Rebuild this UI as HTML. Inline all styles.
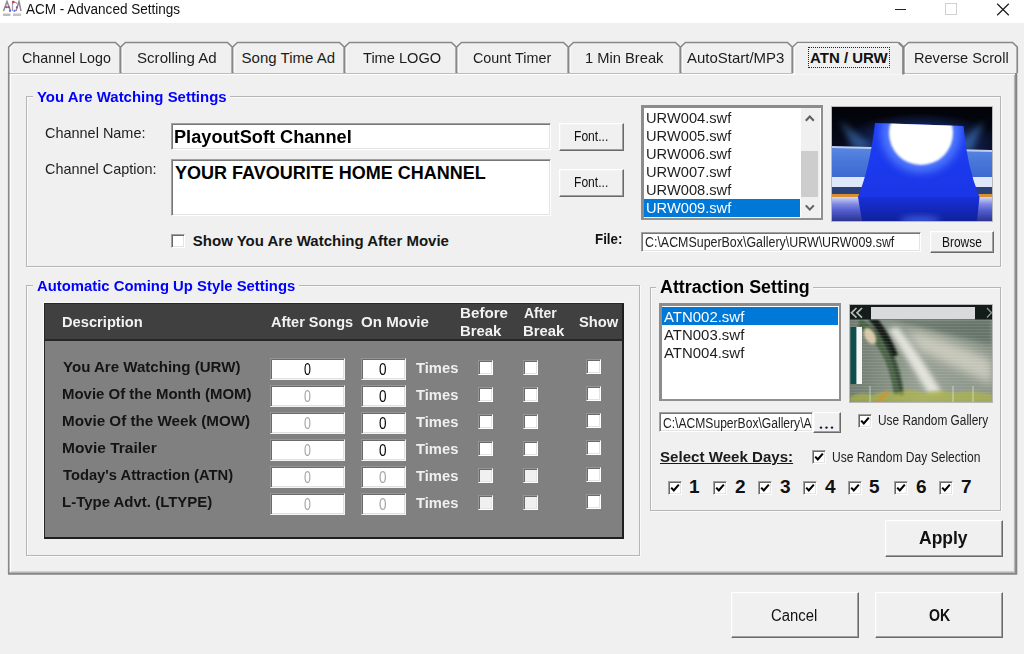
<!DOCTYPE html>
<html><head><meta charset="utf-8"><style>
html,body{margin:0;padding:0;}
body{width:1024px;height:654px;position:relative;overflow:hidden;background:#f0f0f0;font-family:"Liberation Sans",sans-serif;}
body>div,body>svg{position:absolute;}
.t{white-space:nowrap;}
</style></head><body>
<div style="left:0px;top:0px;width:1024px;height:23px;background:#fff"></div>
<svg style="left:0px;top:0px" width="24" height="20" viewBox="0 0 24 20">
<path d="M3.5 11 L7 1.5 L10.5 11 M5 7.3 L9.5 7.3" stroke="#8c8c8c" stroke-width="1.5" fill="none"/>
<path d="M12.5 11 L12.5 3 Q15 1 17 3.5" stroke="#a0a0a0" stroke-width="1.3" fill="none"/>
<path d="M16 11 L19 1.5 L21 11" stroke="#8c8c8c" stroke-width="1.5" fill="none"/>
<circle cx="13.3" cy="2" r="1.3" fill="#d03050"/>
<circle cx="6.4" cy="7.3" r="1" fill="#a040b0"/><circle cx="9" cy="7.3" r="1" fill="#a040b0"/><circle cx="16.8" cy="7.3" r="1" fill="#a040b0"/>
<circle cx="10" cy="10.8" r="1.1" fill="#5a5aff"/><circle cx="14.5" cy="10.8" r="1.1" fill="#5a5aff"/>
<rect x="3" y="13.5" width="7.5" height="2.5" fill="#bdbdbd"/><rect x="13" y="13.5" width="8" height="2.5" fill="#c4c4c4"/>
</svg>
<div class="t" style="left:26.30px;top:2px;font:14px/14px 'Liberation Sans',sans-serif;color:#111;transform:scaleX(0.9654);transform-origin:0 0;">ACM - Advanced Settings</div>
<div style="left:895px;top:9px;width:11px;height:1px;background:#222"></div>
<div style="left:945px;top:3px;width:12px;height:12px;border:1px solid #d0d0d0;box-sizing:border-box"></div>
<svg style="left:996px;top:3px" width="14" height="13" viewBox="0 0 14 13">
<path d="M1.2 0.8 L12.8 12.2 M12.8 0.8 L1.2 12.2" stroke="#1a1a1a" stroke-width="1.2"/></svg>
<svg style="left:0;top:36px" width="1024" height="545" viewBox="0 36 1024 545">
<rect x="8" y="73" width="1009" height="501" fill="#f0f0f0"/>
<path d="M8.75 574 V72.75 H1017" stroke="#888888" stroke-width="1.7" fill="none"/>
<path d="M10.5 573 V74.5 H1015" stroke="#ffffff" stroke-width="1.2" fill="none"/>
<path d="M1016.2 73 V573.7 H8" stroke="#858585" stroke-width="2.2" fill="none"/>
<path d="M1014.4 75 V572 H11" stroke="#b0b0b0" stroke-width="1" fill="none"/>
<path d="M8.75 73 V47 L13.5 42.5 H115.5 L120.25 47 V73" fill="#f0f0f0" stroke="#888888" stroke-width="1.7"/>
<path d="M10.2 72 V47.6 L14 44" stroke="#fff" stroke-width="1" fill="none"/>
<path d="M120.75 73 V47 L125.5 42.5 H227.5 L232.25 47 V73" fill="#f0f0f0" stroke="#888888" stroke-width="1.7"/>
<path d="M122.2 72 V47.6 L126 44" stroke="#fff" stroke-width="1" fill="none"/>
<path d="M232.75 73 V47 L237.5 42.5 H339.5 L344.25 47 V73" fill="#f0f0f0" stroke="#888888" stroke-width="1.7"/>
<path d="M234.2 72 V47.6 L238 44" stroke="#fff" stroke-width="1" fill="none"/>
<path d="M344.75 73 V47 L349.5 42.5 H451.5 L456.25 47 V73" fill="#f0f0f0" stroke="#888888" stroke-width="1.7"/>
<path d="M346.2 72 V47.6 L350 44" stroke="#fff" stroke-width="1" fill="none"/>
<path d="M456.75 73 V47 L461.5 42.5 H563.5 L568.25 47 V73" fill="#f0f0f0" stroke="#888888" stroke-width="1.7"/>
<path d="M458.2 72 V47.6 L462 44" stroke="#fff" stroke-width="1" fill="none"/>
<path d="M568.75 73 V47 L573.5 42.5 H675.5 L680.25 47 V73" fill="#f0f0f0" stroke="#888888" stroke-width="1.7"/>
<path d="M570.2 72 V47.6 L574 44" stroke="#fff" stroke-width="1" fill="none"/>
<path d="M680.75 73 V47 L685.5 42.5 H787.5 L792.25 47 V73" fill="#f0f0f0" stroke="#888888" stroke-width="1.7"/>
<path d="M682.2 72 V47.6 L686 44" stroke="#fff" stroke-width="1" fill="none"/>
<path d="M903.75 73 V47 L908.5 42.5 H1012.5 L1017.25 47 V73" fill="#f0f0f0" stroke="#888888" stroke-width="1.7"/>
<path d="M905.2 72 V47.6 L909 44" stroke="#fff" stroke-width="1" fill="none"/>
<path d="M792.75 74.5 V47 L797.5 42.5 H898.5 L903.25 47 V74.5" fill="#f0f0f0" stroke="none"/>
<path d="M792.75 73 V47 L797.5 42.5 H898.5" stroke="#888888" stroke-width="1.7" fill="none"/>
<path d="M794.2 75 V47.6 L798 44 H898" stroke="#fff" stroke-width="1.1" fill="none"/>
<path d="M898.5 42.5 L903.25 47 V74.5" stroke="#858585" stroke-width="2.2" fill="none"/>
</svg>
<div class="t" style="left:22.10px;top:50px;font:15px/15px 'Liberation Sans',sans-serif;color:#1c1c1c;transform:scaleX(0.9516);transform-origin:0 0;">Channel Logo</div>
<div class="t" style="left:136.59px;top:50px;font:15px/15px 'Liberation Sans',sans-serif;color:#1c1c1c;transform:scaleX(1.0064);transform-origin:0 0;">Scrolling Ad</div>
<div class="t" style="left:241.60px;top:50px;font:15px/15px 'Liberation Sans',sans-serif;color:#1c1c1c;">Song Time Ad</div>
<div class="t" style="left:362.80px;top:50px;font:15px/15px 'Liberation Sans',sans-serif;color:#1c1c1c;transform:scaleX(0.9737);transform-origin:0 0;">Time LOGO</div>
<div class="t" style="left:473.00px;top:50px;font:15px/15px 'Liberation Sans',sans-serif;color:#1c1c1c;transform:scaleX(0.9573);transform-origin:0 0;">Count Timer</div>
<div class="t" style="left:584.62px;top:50px;font:15px/15px 'Liberation Sans',sans-serif;color:#1c1c1c;transform:scaleX(0.9797);transform-origin:0 0;">1 Min Break</div>
<div class="t" style="left:687.00px;top:50px;font:15px/15px 'Liberation Sans',sans-serif;color:#1c1c1c;transform:scaleX(0.9979);transform-origin:0 0;">AutoStart/MP3</div>
<div class="t" style="left:914.13px;top:50px;font:15px/15px 'Liberation Sans',sans-serif;color:#1c1c1c;transform:scaleX(0.9708);transform-origin:0 0;">Reverse Scroll</div>
<div class="t" style="left:810.00px;top:50px;font:bold 15px/15px 'Liberation Sans',sans-serif;color:#111;">ATN / URW</div>
<div style="left:808px;top:47px;width:82px;height:21px;border:1px dotted #222;box-sizing:border-box"></div>
<div style="left:26px;top:96px;width:975px;height:171px;border:1px solid #b6b6b6;box-sizing:border-box;box-shadow:1px 1px 0 #fafafa, inset 1px 1px 0 #fafafa"></div>
<div style="left:33.2px;top:88px;width:197.3px;height:14px;background:#f0f0f0"></div>
<div class="t" style="left:37.20px;top:89px;font:bold 15px/15px 'Liberation Sans',sans-serif;color:#0000ff;transform:scaleX(0.9963);transform-origin:0 0;">You Are Watching Settings</div>
<div class="t" style="left:44.80px;top:125px;font:15px/15px 'Liberation Sans',sans-serif;color:#1e1e1e;transform:scaleX(0.9641);transform-origin:0 0;">Channel Name:</div>
<div class="t" style="left:44.80px;top:161px;font:15px/15px 'Liberation Sans',sans-serif;color:#1e1e1e;transform:scaleX(0.9626);transform-origin:0 0;">Channel Caption:</div>
<div style="left:171px;top:123px;width:380px;height:27px;background:#fff;border:1px solid;border-color:#a0a0a0 #ffffff #ffffff #a0a0a0;box-sizing:border-box;box-shadow:inset 1px 1px 0 #777777, inset -1px -1px 0 #e3e3e3"></div>
<div class="t" style="left:173.99px;top:128px;font:bold 18px/18px 'Liberation Sans',sans-serif;color:#000;transform:scaleX(1.0098);transform-origin:0 0;">PlayoutSoft Channel</div>
<div style="left:171px;top:159px;width:380px;height:57px;background:#fff;border:1px solid;border-color:#a0a0a0 #ffffff #ffffff #a0a0a0;box-sizing:border-box;box-shadow:inset 1px 1px 0 #777777, inset -1px -1px 0 #e3e3e3"></div>
<div class="t" style="left:175.00px;top:164px;font:bold 18px/18px 'Liberation Sans',sans-serif;color:#000;">YOUR FAVOURITE HOME CHANNEL</div>
<div style="left:559px;top:123px;width:65px;height:28px;background:#f0f0f0;border:1px solid;border-color:#ffffff #6a6a6a #6a6a6a #ffffff;box-sizing:border-box;box-shadow:inset -1px -1px 0 #a0a0a0, inset 1px 1px 0 #f4f4f4"></div>
<div class="t" style="left:573.74px;top:129px;font:14px/14px 'Liberation Sans',sans-serif;color:#111;transform:scaleX(0.8632);transform-origin:0 0;">Font...</div>
<div style="left:559px;top:169px;width:65px;height:28px;background:#f0f0f0;border:1px solid;border-color:#ffffff #6a6a6a #6a6a6a #ffffff;box-sizing:border-box;box-shadow:inset -1px -1px 0 #a0a0a0, inset 1px 1px 0 #f4f4f4"></div>
<div class="t" style="left:573.74px;top:175px;font:14px/14px 'Liberation Sans',sans-serif;color:#111;transform:scaleX(0.8632);transform-origin:0 0;">Font...</div>
<div style="left:171px;top:234px;width:14px;height:14px;background:#fff;border:1px solid;border-color:#a0a0a0 #ffffff #ffffff #a0a0a0;box-sizing:border-box;box-shadow:inset 1px 1px 0 #696969, inset -1px -1px 0 #e3e3e3"></div>
<div class="t" style="left:192.80px;top:233px;font:bold 15px/15px 'Liberation Sans',sans-serif;color:#161616;">Show You Are Watching After Movie</div>
<div class="t" style="left:595.25px;top:232px;font:bold 14px/14px 'Liberation Sans',sans-serif;color:#111;transform:scaleX(0.9519);transform-origin:0 0;">File:</div>
<div style="left:641px;top:232px;width:280px;height:20px;background:#fff;border:1px solid;border-color:#a0a0a0 #ffffff #ffffff #a0a0a0;box-sizing:border-box;box-shadow:inset 1px 1px 0 #777777, inset -1px -1px 0 #e3e3e3"></div>
<div class="t" style="left:644.60px;top:235px;font:14px/14px 'Liberation Sans',sans-serif;color:#222;transform:scaleX(0.8869);transform-origin:0 0;">C:\ACMSuperBox\Gallery\URW\URW009.swf</div>
<div style="left:930px;top:231px;width:64px;height:22px;background:#f0f0f0;border:1px solid;border-color:#ffffff #6a6a6a #6a6a6a #ffffff;box-sizing:border-box;box-shadow:inset -1px -1px 0 #a0a0a0, inset 1px 1px 0 #f4f4f4"></div>
<div class="t" style="left:941.85px;top:235px;font:14px/14px 'Liberation Sans',sans-serif;color:#111;transform:scaleX(0.8543);transform-origin:0 0;">Browse</div>
<div style="left:641px;top:105px;width:182px;height:115px;background:#fff;border-style:solid;border-width:3px 2px 2px 3px;border-color:#8c8c8c #909090 #909090 #8c8c8c;box-sizing:border-box"></div>
<div class="t" style="left:646.02px;top:110px;font:15px/15px 'Liberation Sans',sans-serif;color:#1e1e1e;transform:scaleX(0.9770);transform-origin:0 0;">URW004.swf</div>
<div class="t" style="left:646.02px;top:128px;font:15px/15px 'Liberation Sans',sans-serif;color:#1e1e1e;transform:scaleX(0.9770);transform-origin:0 0;">URW005.swf</div>
<div class="t" style="left:646.02px;top:146px;font:15px/15px 'Liberation Sans',sans-serif;color:#1e1e1e;transform:scaleX(0.9770);transform-origin:0 0;">URW006.swf</div>
<div class="t" style="left:646.02px;top:164px;font:15px/15px 'Liberation Sans',sans-serif;color:#1e1e1e;transform:scaleX(0.9770);transform-origin:0 0;">URW007.swf</div>
<div class="t" style="left:646.02px;top:182px;font:15px/15px 'Liberation Sans',sans-serif;color:#1e1e1e;transform:scaleX(0.9770);transform-origin:0 0;">URW008.swf</div>
<div style="left:644px;top:199px;width:156px;height:18px;background:#0078d7"></div>
<div class="t" style="left:646.02px;top:200px;font:15px/15px 'Liberation Sans',sans-serif;color:#fff;transform:scaleX(0.9770);transform-origin:0 0;">URW009.swf</div>
<div style="left:801px;top:108px;width:19px;height:110px;background:#f0f0f0"></div>
<div style="left:801px;top:151px;width:17px;height:46px;background:#cdcdcd"></div>
<svg style="left:801px;top:108px" width="18" height="110"><path d="M4.8 12.8 L8.8 8.6 L12.8 12.8" stroke="#606060" stroke-width="2.1" fill="none"/><path d="M4.8 97.4 L8.8 101.6 L12.8 97.4" stroke="#606060" stroke-width="2.1" fill="none"/></svg>
<div style="left:831px;top:106px;width:162px;height:116px;background:#b8b8b8"></div>
<svg style="left:832px;top:107px" width="160" height="114" viewBox="0 0 160 114">
<defs>
<linearGradient id="sky" x1="0" y1="0" x2="0" y2="1"><stop offset="0" stop-color="#020308"/><stop offset="0.5" stop-color="#080e24"/><stop offset="1" stop-color="#142050"/></linearGradient>
<radialGradient id="skyg" cx="0.55" cy="0.6" r="0.5"><stop offset="0" stop-color="#2a50c0" stop-opacity="0.9"/><stop offset="1" stop-color="#2a50c0" stop-opacity="0"/></radialGradient>
<radialGradient id="glow" cx="0.5" cy="0.2" r="0.62"><stop offset="0" stop-color="#ffffff"/><stop offset="0.55" stop-color="#ffffff"/><stop offset="0.75" stop-color="#7aa4ff"/><stop offset="1" stop-color="#2040ff" stop-opacity="0"/></radialGradient>
<linearGradient id="band" x1="0" y1="0" x2="0" y2="1"><stop offset="0" stop-color="#5a88e4"/><stop offset="0.5" stop-color="#4876d8"/><stop offset="1" stop-color="#3e6ad0"/></linearGradient>
<linearGradient id="low" x1="0" y1="0" x2="0" y2="1"><stop offset="0" stop-color="#d4d8f4"/><stop offset="0.3" stop-color="#8088e0"/><stop offset="0.55" stop-color="#5460d0"/><stop offset="1" stop-color="#2a3490"/></linearGradient>
<linearGradient id="blk" x1="0" y1="0" x2="0" y2="1"><stop offset="0" stop-color="#1e3ef6"/><stop offset="1" stop-color="#1a36e6"/></linearGradient>
<linearGradient id="refl" x1="0" y1="0" x2="0" y2="1"><stop offset="0" stop-color="#1830d8"/><stop offset="1" stop-color="#10209c"/></linearGradient>
<filter id="bl4" x="-50%" y="-50%" width="200%" height="200%"><feGaussianBlur stdDeviation="4"/></filter>
<filter id="bl1" x="-50%" y="-50%" width="200%" height="200%"><feGaussianBlur stdDeviation="1.2"/></filter>
<filter id="bl3" x="-50%" y="-50%" width="200%" height="200%"><feGaussianBlur stdDeviation="3"/></filter>
<clipPath id="blkc"><path d="M43 16 L131.5 19 Q135 60 147.5 90 L26 90 Q38 60 43 16 Z"/></clipPath>
</defs>
<rect width="160" height="114" fill="url(#sky)"/>
<rect width="160" height="60" fill="url(#skyg)"/>
<path d="M8 14 L42 40 L22 42 Z" fill="#4a88d0" opacity="0.5" filter="url(#bl3)"/>
<path d="M152 14 L120 42 L140 44 Z" fill="#4a88d0" opacity="0.5" filter="url(#bl3)"/>
<path d="M0 40 L160 44 L160 70 L0 70 Z" fill="url(#band)"/>
<path d="M0 40 L160 44" stroke="#c0ccf0" stroke-width="2"/>
<rect x="0" y="70" width="160" height="10" fill="#dfe8fa"/>
<rect x="0" y="80" width="160" height="7" fill="#2c4078"/>
<rect x="0" y="87" width="160" height="3" fill="#d89030"/>
<rect x="0" y="90" width="160" height="24" fill="url(#low)"/>
<path d="M43 16 L131.5 19 Q135 60 147.5 90 L26 90 Q38 60 43 16 Z" fill="url(#blk)"/>
<path d="M26 90 L147.5 90 L145 114 L30 114 Z" fill="url(#refl)"/>
<g clip-path="url(#blkc)">
<circle cx="89" cy="26" r="40" fill="#5a86ff" opacity="0.8" filter="url(#bl4)"/>
<circle cx="89" cy="26" r="32" fill="#ffffff" filter="url(#bl1)"/>
</g>
<ellipse cx="88" cy="113" rx="20" ry="4" fill="#5a7cff" opacity="0.6" filter="url(#bl3)"/>
</svg>
<div style="left:26px;top:285px;width:614px;height:271px;border:1px solid #b6b6b6;box-sizing:border-box;box-shadow:1px 1px 0 #fafafa, inset 1px 1px 0 #fafafa"></div>
<div style="left:32.8px;top:277px;width:266.4px;height:14px;background:#f0f0f0"></div>
<div class="t" style="left:36.80px;top:278px;font:bold 15px/15px 'Liberation Sans',sans-serif;color:#0000ff;transform:scaleX(0.9900);transform-origin:0 0;">Automatic Coming Up Style Settings</div>
<div style="left:43px;top:302px;width:582px;height:238px;border-top:1px solid #fafafa;border-left:1px solid #fafafa;box-sizing:border-box"></div>
<div style="left:44px;top:303px;width:580px;height:236px;background:#808080;border:1px solid #262626;border-right:2px solid #1e1e1e;border-bottom:2px solid #1e1e1e;box-sizing:border-box"></div>
<div style="left:45px;top:304px;width:577px;height:35px;background:#404040"></div>
<div style="left:45px;top:339px;width:577px;height:2px;background:#262626"></div>
<div class="t" style="left:61.72px;top:314px;font:bold 15px/15px 'Liberation Sans',sans-serif;color:#f2f2f2;transform:scaleX(0.9790);transform-origin:0 0;">Description</div>
<div class="t" style="left:270.70px;top:314px;font:bold 15px/15px 'Liberation Sans',sans-serif;color:#f2f2f2;transform:scaleX(0.9659);transform-origin:0 0;">After Songs</div>
<div class="t" style="left:360.60px;top:314px;font:bold 15px/15px 'Liberation Sans',sans-serif;color:#f2f2f2;transform:scaleX(1.0060);transform-origin:0 0;">On Movie</div>
<div class="t" style="left:459.79px;top:305px;font:bold 15px/15px 'Liberation Sans',sans-serif;color:#f2f2f2;transform:scaleX(1.0109);transform-origin:0 0;">Before</div>
<div class="t" style="left:459.81px;top:323px;font:bold 15px/15px 'Liberation Sans',sans-serif;color:#f2f2f2;transform:scaleX(0.9927);transform-origin:0 0;">Break</div>
<div class="t" style="left:523.90px;top:305px;font:bold 15px/15px 'Liberation Sans',sans-serif;color:#f2f2f2;transform:scaleX(0.9343);transform-origin:0 0;">After</div>
<div class="t" style="left:522.91px;top:323px;font:bold 15px/15px 'Liberation Sans',sans-serif;color:#f2f2f2;transform:scaleX(0.9927);transform-origin:0 0;">Break</div>
<div class="t" style="left:579.20px;top:314px;font:bold 15px/15px 'Liberation Sans',sans-serif;color:#f2f2f2;transform:scaleX(0.9825);transform-origin:0 0;">Show</div>
<div class="t" style="left:63.00px;top:359px;font:bold 15px/15px 'Liberation Sans',sans-serif;color:#141414;transform:scaleX(1.0045);transform-origin:0 0;">You Are Watching (URW)</div>
<div style="left:270px;top:358px;width:75px;height:22px;background:#fff;border:1px solid;border-color:#959595 #f4f4f4 #f4f4f4 #959595;box-sizing:border-box;box-shadow:inset 1px 1px 0 #6a6a6a, inset -1px -1px 0 #e0e0e0"></div>
<div class="t" style="left:303.50px;top:362px;font:16px/16px 'Liberation Sans',sans-serif;color:#000;transform:scaleX(0.7778);transform-origin:0 0;">0</div>
<div style="left:361px;top:358px;width:45px;height:22px;background:#fff;border:1px solid;border-color:#959595 #f4f4f4 #f4f4f4 #959595;box-sizing:border-box;box-shadow:inset 1px 1px 0 #6a6a6a, inset -1px -1px 0 #e0e0e0"></div>
<div class="t" style="left:378.70px;top:362px;font:16px/16px 'Liberation Sans',sans-serif;color:#000;transform:scaleX(0.8444);transform-origin:0 0;">0</div>
<div class="t" style="left:415.50px;top:360px;font:bold 15px/15px 'Liberation Sans',sans-serif;color:#f0f0f0;transform:scaleX(0.9837);transform-origin:0 0;">Times</div>
<div style="left:478px;top:360px;width:15px;height:15px;background:#fff;border:1px solid;border-color:#959595 #ffffff #ffffff #959595;box-sizing:border-box;box-shadow:inset 1px 1px 0 #6a6a6a, inset -1px -1px 0 #e3e3e3"></div>
<div style="left:523px;top:360px;width:15px;height:15px;background:#fff;border:1px solid;border-color:#959595 #ffffff #ffffff #959595;box-sizing:border-box;box-shadow:inset 1px 1px 0 #6a6a6a, inset -1px -1px 0 #e3e3e3"></div>
<div style="left:586px;top:359px;width:15px;height:15px;background:#fff;border:1px solid;border-color:#959595 #ffffff #ffffff #959595;box-sizing:border-box;box-shadow:inset 1px 1px 0 #6a6a6a, inset -1px -1px 0 #e3e3e3"></div>
<div class="t" style="left:62.00px;top:386px;font:bold 15px/15px 'Liberation Sans',sans-serif;color:#141414;transform:scaleX(0.9974);transform-origin:0 0;">Movie Of the Month (MOM)</div>
<div style="left:270px;top:385px;width:75px;height:22px;background:#fff;border:1px solid;border-color:#959595 #f4f4f4 #f4f4f4 #959595;box-sizing:border-box;box-shadow:inset 1px 1px 0 #6a6a6a, inset -1px -1px 0 #e0e0e0"></div>
<div class="t" style="left:303.50px;top:389px;font:16px/16px 'Liberation Sans',sans-serif;color:#a6a6a6;transform:scaleX(0.7778);transform-origin:0 0;">0</div>
<div style="left:361px;top:385px;width:45px;height:22px;background:#fff;border:1px solid;border-color:#959595 #f4f4f4 #f4f4f4 #959595;box-sizing:border-box;box-shadow:inset 1px 1px 0 #6a6a6a, inset -1px -1px 0 #e0e0e0"></div>
<div class="t" style="left:378.70px;top:389px;font:16px/16px 'Liberation Sans',sans-serif;color:#000;transform:scaleX(0.8444);transform-origin:0 0;">0</div>
<div class="t" style="left:415.50px;top:387px;font:bold 15px/15px 'Liberation Sans',sans-serif;color:#f0f0f0;transform:scaleX(0.9837);transform-origin:0 0;">Times</div>
<div style="left:478px;top:387px;width:15px;height:15px;background:#fff;border:1px solid;border-color:#959595 #ffffff #ffffff #959595;box-sizing:border-box;box-shadow:inset 1px 1px 0 #6a6a6a, inset -1px -1px 0 #e3e3e3"></div>
<div style="left:523px;top:387px;width:15px;height:15px;background:#fff;border:1px solid;border-color:#959595 #ffffff #ffffff #959595;box-sizing:border-box;box-shadow:inset 1px 1px 0 #6a6a6a, inset -1px -1px 0 #e3e3e3"></div>
<div style="left:586px;top:386px;width:15px;height:15px;background:#fff;border:1px solid;border-color:#959595 #ffffff #ffffff #959595;box-sizing:border-box;box-shadow:inset 1px 1px 0 #6a6a6a, inset -1px -1px 0 #e3e3e3"></div>
<div class="t" style="left:61.99px;top:413px;font:bold 15px/15px 'Liberation Sans',sans-serif;color:#141414;transform:scaleX(1.0141);transform-origin:0 0;">Movie Of the Week (MOW)</div>
<div style="left:270px;top:412px;width:75px;height:22px;background:#fff;border:1px solid;border-color:#959595 #f4f4f4 #f4f4f4 #959595;box-sizing:border-box;box-shadow:inset 1px 1px 0 #6a6a6a, inset -1px -1px 0 #e0e0e0"></div>
<div class="t" style="left:303.50px;top:416px;font:16px/16px 'Liberation Sans',sans-serif;color:#a6a6a6;transform:scaleX(0.7778);transform-origin:0 0;">0</div>
<div style="left:361px;top:412px;width:45px;height:22px;background:#fff;border:1px solid;border-color:#959595 #f4f4f4 #f4f4f4 #959595;box-sizing:border-box;box-shadow:inset 1px 1px 0 #6a6a6a, inset -1px -1px 0 #e0e0e0"></div>
<div class="t" style="left:378.70px;top:416px;font:16px/16px 'Liberation Sans',sans-serif;color:#000;transform:scaleX(0.8444);transform-origin:0 0;">0</div>
<div class="t" style="left:415.50px;top:414px;font:bold 15px/15px 'Liberation Sans',sans-serif;color:#f0f0f0;transform:scaleX(0.9837);transform-origin:0 0;">Times</div>
<div style="left:478px;top:414px;width:15px;height:15px;background:#fff;border:1px solid;border-color:#959595 #ffffff #ffffff #959595;box-sizing:border-box;box-shadow:inset 1px 1px 0 #6a6a6a, inset -1px -1px 0 #e3e3e3"></div>
<div style="left:523px;top:414px;width:15px;height:15px;background:#fff;border:1px solid;border-color:#959595 #ffffff #ffffff #959595;box-sizing:border-box;box-shadow:inset 1px 1px 0 #6a6a6a, inset -1px -1px 0 #e3e3e3"></div>
<div style="left:586px;top:413px;width:15px;height:15px;background:#fff;border:1px solid;border-color:#959595 #ffffff #ffffff #959595;box-sizing:border-box;box-shadow:inset 1px 1px 0 #6a6a6a, inset -1px -1px 0 #e3e3e3"></div>
<div class="t" style="left:61.97px;top:440px;font:bold 15px/15px 'Liberation Sans',sans-serif;color:#141414;transform:scaleX(1.0330);transform-origin:0 0;">Movie Trailer</div>
<div style="left:270px;top:439px;width:75px;height:22px;background:#fff;border:1px solid;border-color:#959595 #f4f4f4 #f4f4f4 #959595;box-sizing:border-box;box-shadow:inset 1px 1px 0 #6a6a6a, inset -1px -1px 0 #e0e0e0"></div>
<div class="t" style="left:303.50px;top:443px;font:16px/16px 'Liberation Sans',sans-serif;color:#a6a6a6;transform:scaleX(0.7778);transform-origin:0 0;">0</div>
<div style="left:361px;top:439px;width:45px;height:22px;background:#fff;border:1px solid;border-color:#959595 #f4f4f4 #f4f4f4 #959595;box-sizing:border-box;box-shadow:inset 1px 1px 0 #6a6a6a, inset -1px -1px 0 #e0e0e0"></div>
<div class="t" style="left:378.70px;top:443px;font:16px/16px 'Liberation Sans',sans-serif;color:#000;transform:scaleX(0.8444);transform-origin:0 0;">0</div>
<div class="t" style="left:415.50px;top:441px;font:bold 15px/15px 'Liberation Sans',sans-serif;color:#f0f0f0;transform:scaleX(0.9837);transform-origin:0 0;">Times</div>
<div style="left:478px;top:441px;width:15px;height:15px;background:#fff;border:1px solid;border-color:#959595 #ffffff #ffffff #959595;box-sizing:border-box;box-shadow:inset 1px 1px 0 #6a6a6a, inset -1px -1px 0 #e3e3e3"></div>
<div style="left:523px;top:441px;width:15px;height:15px;background:#fff;border:1px solid;border-color:#959595 #ffffff #ffffff #959595;box-sizing:border-box;box-shadow:inset 1px 1px 0 #6a6a6a, inset -1px -1px 0 #e3e3e3"></div>
<div style="left:586px;top:440px;width:15px;height:15px;background:#fff;border:1px solid;border-color:#959595 #ffffff #ffffff #959595;box-sizing:border-box;box-shadow:inset 1px 1px 0 #6a6a6a, inset -1px -1px 0 #e3e3e3"></div>
<div class="t" style="left:63.00px;top:467px;font:bold 15px/15px 'Liberation Sans',sans-serif;color:#141414;transform:scaleX(0.9815);transform-origin:0 0;">Today's Attraction (ATN)</div>
<div style="left:270px;top:466px;width:75px;height:22px;background:#fff;border:1px solid;border-color:#959595 #f4f4f4 #f4f4f4 #959595;box-sizing:border-box;box-shadow:inset 1px 1px 0 #6a6a6a, inset -1px -1px 0 #e0e0e0"></div>
<div class="t" style="left:303.50px;top:470px;font:16px/16px 'Liberation Sans',sans-serif;color:#a6a6a6;transform:scaleX(0.7778);transform-origin:0 0;">0</div>
<div style="left:361px;top:466px;width:45px;height:22px;background:#fff;border:1px solid;border-color:#959595 #f4f4f4 #f4f4f4 #959595;box-sizing:border-box;box-shadow:inset 1px 1px 0 #6a6a6a, inset -1px -1px 0 #e0e0e0"></div>
<div class="t" style="left:378.70px;top:470px;font:16px/16px 'Liberation Sans',sans-serif;color:#a6a6a6;transform:scaleX(0.8444);transform-origin:0 0;">0</div>
<div class="t" style="left:415.50px;top:468px;font:bold 15px/15px 'Liberation Sans',sans-serif;color:#f0f0f0;transform:scaleX(0.9837);transform-origin:0 0;">Times</div>
<div style="left:478px;top:468px;width:15px;height:15px;background:#f0f0f0;border:1px solid;border-color:#959595 #ffffff #ffffff #959595;box-sizing:border-box;box-shadow:inset 1px 1px 0 #6a6a6a, inset -1px -1px 0 #e3e3e3"></div>
<div style="left:523px;top:468px;width:15px;height:15px;background:#f0f0f0;border:1px solid;border-color:#959595 #ffffff #ffffff #959595;box-sizing:border-box;box-shadow:inset 1px 1px 0 #6a6a6a, inset -1px -1px 0 #e3e3e3"></div>
<div style="left:586px;top:467px;width:15px;height:15px;background:#fff;border:1px solid;border-color:#959595 #ffffff #ffffff #959595;box-sizing:border-box;box-shadow:inset 1px 1px 0 #6a6a6a, inset -1px -1px 0 #e3e3e3"></div>
<div class="t" style="left:62.00px;top:494px;font:bold 15px/15px 'Liberation Sans',sans-serif;color:#141414;transform:scaleX(0.9980);transform-origin:0 0;">L-Type Advt. (LTYPE)</div>
<div style="left:270px;top:493px;width:75px;height:22px;background:#fff;border:1px solid;border-color:#959595 #f4f4f4 #f4f4f4 #959595;box-sizing:border-box;box-shadow:inset 1px 1px 0 #6a6a6a, inset -1px -1px 0 #e0e0e0"></div>
<div class="t" style="left:303.50px;top:497px;font:16px/16px 'Liberation Sans',sans-serif;color:#a6a6a6;transform:scaleX(0.7778);transform-origin:0 0;">0</div>
<div style="left:361px;top:493px;width:45px;height:22px;background:#fff;border:1px solid;border-color:#959595 #f4f4f4 #f4f4f4 #959595;box-sizing:border-box;box-shadow:inset 1px 1px 0 #6a6a6a, inset -1px -1px 0 #e0e0e0"></div>
<div class="t" style="left:378.70px;top:497px;font:16px/16px 'Liberation Sans',sans-serif;color:#a6a6a6;transform:scaleX(0.8444);transform-origin:0 0;">0</div>
<div class="t" style="left:415.50px;top:495px;font:bold 15px/15px 'Liberation Sans',sans-serif;color:#f0f0f0;transform:scaleX(0.9837);transform-origin:0 0;">Times</div>
<div style="left:478px;top:495px;width:15px;height:15px;background:#f0f0f0;border:1px solid;border-color:#959595 #ffffff #ffffff #959595;box-sizing:border-box;box-shadow:inset 1px 1px 0 #6a6a6a, inset -1px -1px 0 #e3e3e3"></div>
<div style="left:523px;top:495px;width:15px;height:15px;background:#f0f0f0;border:1px solid;border-color:#959595 #ffffff #ffffff #959595;box-sizing:border-box;box-shadow:inset 1px 1px 0 #6a6a6a, inset -1px -1px 0 #e3e3e3"></div>
<div style="left:586px;top:494px;width:15px;height:15px;background:#fff;border:1px solid;border-color:#959595 #ffffff #ffffff #959595;box-sizing:border-box;box-shadow:inset 1px 1px 0 #6a6a6a, inset -1px -1px 0 #e3e3e3"></div>
<div style="left:650px;top:287px;width:351px;height:224px;border:1px solid #b6b6b6;box-sizing:border-box;box-shadow:1px 1px 0 #fafafa, inset 1px 1px 0 #fafafa"></div>
<div style="left:656.1px;top:279px;width:156.69999999999993px;height:14px;background:#f0f0f0"></div>
<div class="t" style="left:660.10px;top:278px;font:bold 18px/18px 'Liberation Sans',sans-serif;color:#000;transform:scaleX(0.9913);transform-origin:0 0;">Attraction Setting</div>
<div style="left:659px;top:303px;width:182px;height:98px;background:#fff;border-style:solid;border-width:3px 2px 2px 3px;border-color:#8c8c8c #909090 #909090 #8c8c8c;box-sizing:border-box"></div>
<div style="left:662px;top:307px;width:176px;height:18px;background:#0078d7"></div>
<div class="t" style="left:664.30px;top:309px;font:15px/15px 'Liberation Sans',sans-serif;color:#fff;transform:scaleX(0.9963);transform-origin:0 0;">ATN002.swf</div>
<div class="t" style="left:664.30px;top:327px;font:15px/15px 'Liberation Sans',sans-serif;color:#1e1e1e;transform:scaleX(0.9963);transform-origin:0 0;">ATN003.swf</div>
<div class="t" style="left:664.30px;top:345px;font:15px/15px 'Liberation Sans',sans-serif;color:#1e1e1e;transform:scaleX(0.9963);transform-origin:0 0;">ATN004.swf</div>
<div style="left:849px;top:304px;width:144px;height:99px;background:#b8b8b8"></div>
<svg style="left:850px;top:305px" width="142" height="97" viewBox="0 0 142 97">
<defs>
<linearGradient id="g2" x1="0" y1="0" x2="1" y2="0"><stop offset="0" stop-color="#707c70"/><stop offset="0.5" stop-color="#98a094"/><stop offset="1" stop-color="#8a9488"/></linearGradient>
<pattern id="scan" width="4" height="3" patternUnits="userSpaceOnUse"><rect width="4" height="1" fill="#ffffff" opacity="0.09"/></pattern>
<filter id="b2" x="-50%" y="-50%" width="200%" height="200%"><feGaussianBlur stdDeviation="2.5"/></filter>
<filter id="b4" x="-50%" y="-50%" width="200%" height="200%"><feGaussianBlur stdDeviation="5"/></filter>
<filter id="b1" x="-50%" y="-50%" width="200%" height="200%"><feGaussianBlur stdDeviation="0.9"/></filter>
</defs>
<rect width="142" height="97" fill="url(#g2)"/>
<path d="M40 14 L142 14 L142 40 Q100 30 60 20 Z" fill="#4e5e54" opacity="0.6" filter="url(#b2)"/>
<path d="M55 25 Q100 35 142 55 L142 80 Q100 60 70 45 Z" fill="#d8d6c8" opacity="0.75" filter="url(#b4)"/>
<path d="M38 24 Q55 50 78 88 L92 88 Q70 50 48 22 Z" fill="#eeeee6" opacity="0.85" filter="url(#b2)"/>
<path d="M10 14 Q30 22 44 50 Q52 66 54 90 L44 90 Q40 62 30 46 Q20 30 8 22 Z" fill="#3e5838" opacity="0.8" filter="url(#b1)"/>
<path d="M18 14 L28 14 Q40 30 48 50 L42 52 Q32 30 18 14 Z" fill="#121a18" filter="url(#b1)"/>
<ellipse cx="20" cy="31" rx="5" ry="9" transform="rotate(-30 20 31)" fill="#d8c8a8" filter="url(#b1)"/>
<path d="M36 36 Q46 60 52 90" stroke="#2a3430" stroke-width="1.6" fill="none" filter="url(#b1)"/>
<rect width="142" height="97" fill="url(#scan)"/>
<rect x="0" y="0" width="142" height="14.5" fill="#141c1a"/>
<rect x="21" y="2" width="104" height="12.3" fill="#d8dadb"/>
<path d="M6.5 3 L1.5 7.8 L6.5 12.6 M12 3 L7 7.8 L12 12.6" stroke="#b8bcbc" stroke-width="1.7" fill="none"/>
<path d="M137 3 L141.5 7.8 L137 12.6" stroke="#8a9090" stroke-width="1.4" fill="none"/>
<rect x="0.5" y="22" width="6" height="57" fill="#0a5050"/>
<rect x="6.5" y="22" width="5.5" height="57" fill="#f6f6f6"/>
<path d="M0 92 Q10 86 22 90 Q34 84 46 88 Q60 82 74 88 Q90 83 104 88 Q120 84 142 89 L142 97 L0 97 Z" fill="#b4bc3c" opacity="0.6" filter="url(#b1)"/>
<path d="M28 96 Q34 92 38 86" stroke="#e88a20" stroke-width="2.2" fill="none" filter="url(#b1)"/>
<path d="M20 81 V97 M103 81 V97 M123 81 V97" stroke="#e8ecd8" stroke-width="1.2" opacity="0.55"/>
</svg>
<div style="left:659px;top:412px;width:154px;height:20px;background:#fff;border:1px solid;border-color:#a0a0a0 #ffffff #ffffff #a0a0a0;box-sizing:border-box;box-shadow:inset 1px 1px 0 #777777, inset -1px -1px 0 #e3e3e3"></div>
<div class="t" style="left:662.80px;top:416px;font:14px/14px 'Liberation Sans',sans-serif;color:#222;transform:scaleX(0.8640);transform-origin:0 0;">C:\ACMSuperBox\Gallery\A</div>
<div style="left:813px;top:412px;width:28px;height:21px;background:#f0f0f0;border:1px solid;border-color:#ffffff #6a6a6a #6a6a6a #ffffff;box-sizing:border-box;box-shadow:inset -1px -1px 0 #a0a0a0, inset 1px 1px 0 #f4f4f4"></div>
<svg style="left:813px;top:412px" width="28" height="21"><circle cx="8" cy="15.6" r="1.2" fill="#101040"/><circle cx="13.5" cy="15.6" r="1.2" fill="#101040"/><circle cx="19" cy="15.6" r="1.2" fill="#101040"/></svg>
<div style="left:858px;top:414px;width:14px;height:14px;background:#fff;border:1px solid;border-color:#a0a0a0 #ffffff #ffffff #a0a0a0;box-sizing:border-box;box-shadow:inset 1px 1px 0 #696969, inset -1px -1px 0 #e3e3e3"></div>
<svg style="left:858px;top:414px" width="14" height="14" viewBox="0 0 14 14"><path d="M3.2 6.6 L5.8 9.4 L10.8 3.6" stroke="#000" stroke-width="2.1" fill="none"/></svg>
<div class="t" style="left:877.75px;top:413px;font:14px/14px 'Liberation Sans',sans-serif;color:#222;transform:scaleX(0.8481);transform-origin:0 0;">Use Random Gallery</div>
<div class="t" style="left:659.90px;top:449px;font:bold 15px/15px 'Liberation Sans',sans-serif;color:#1a1a1a;transform:scaleX(1.0061);transform-origin:0 0;text-decoration:underline;text-underline-offset:1px">Select Week Days:</div>
<div style="left:812px;top:450px;width:14px;height:14px;background:#fff;border:1px solid;border-color:#a0a0a0 #ffffff #ffffff #a0a0a0;box-sizing:border-box;box-shadow:inset 1px 1px 0 #696969, inset -1px -1px 0 #e3e3e3"></div>
<svg style="left:812px;top:450px" width="14" height="14" viewBox="0 0 14 14"><path d="M3.2 6.6 L5.8 9.4 L10.8 3.6" stroke="#000" stroke-width="2.1" fill="none"/></svg>
<div class="t" style="left:832.44px;top:450px;font:14px/14px 'Liberation Sans',sans-serif;color:#222;transform:scaleX(0.8626);transform-origin:0 0;">Use Random Day Selection</div>
<div style="left:668px;top:481px;width:14px;height:14px;background:#fff;border:1px solid;border-color:#a0a0a0 #ffffff #ffffff #a0a0a0;box-sizing:border-box;box-shadow:inset 1px 1px 0 #696969, inset -1px -1px 0 #e3e3e3"></div>
<svg style="left:668px;top:481px" width="14" height="14" viewBox="0 0 14 14"><path d="M3.2 6.6 L5.8 9.4 L10.8 3.6" stroke="#000" stroke-width="2.1" fill="none"/></svg>
<div class="t" style="left:689.00px;top:477px;font:bold 19px/19px 'Liberation Sans',sans-serif;color:#111;">1</div>
<div style="left:713px;top:481px;width:14px;height:14px;background:#fff;border:1px solid;border-color:#a0a0a0 #ffffff #ffffff #a0a0a0;box-sizing:border-box;box-shadow:inset 1px 1px 0 #696969, inset -1px -1px 0 #e3e3e3"></div>
<svg style="left:713px;top:481px" width="14" height="14" viewBox="0 0 14 14"><path d="M3.2 6.6 L5.8 9.4 L10.8 3.6" stroke="#000" stroke-width="2.1" fill="none"/></svg>
<div class="t" style="left:735.00px;top:477px;font:bold 19px/19px 'Liberation Sans',sans-serif;color:#111;">2</div>
<div style="left:758px;top:481px;width:14px;height:14px;background:#fff;border:1px solid;border-color:#a0a0a0 #ffffff #ffffff #a0a0a0;box-sizing:border-box;box-shadow:inset 1px 1px 0 #696969, inset -1px -1px 0 #e3e3e3"></div>
<svg style="left:758px;top:481px" width="14" height="14" viewBox="0 0 14 14"><path d="M3.2 6.6 L5.8 9.4 L10.8 3.6" stroke="#000" stroke-width="2.1" fill="none"/></svg>
<div class="t" style="left:780.00px;top:477px;font:bold 19px/19px 'Liberation Sans',sans-serif;color:#111;">3</div>
<div style="left:803px;top:481px;width:14px;height:14px;background:#fff;border:1px solid;border-color:#a0a0a0 #ffffff #ffffff #a0a0a0;box-sizing:border-box;box-shadow:inset 1px 1px 0 #696969, inset -1px -1px 0 #e3e3e3"></div>
<svg style="left:803px;top:481px" width="14" height="14" viewBox="0 0 14 14"><path d="M3.2 6.6 L5.8 9.4 L10.8 3.6" stroke="#000" stroke-width="2.1" fill="none"/></svg>
<div class="t" style="left:825.00px;top:477px;font:bold 19px/19px 'Liberation Sans',sans-serif;color:#111;">4</div>
<div style="left:848px;top:481px;width:14px;height:14px;background:#fff;border:1px solid;border-color:#a0a0a0 #ffffff #ffffff #a0a0a0;box-sizing:border-box;box-shadow:inset 1px 1px 0 #696969, inset -1px -1px 0 #e3e3e3"></div>
<svg style="left:848px;top:481px" width="14" height="14" viewBox="0 0 14 14"><path d="M3.2 6.6 L5.8 9.4 L10.8 3.6" stroke="#000" stroke-width="2.1" fill="none"/></svg>
<div class="t" style="left:869.00px;top:477px;font:bold 19px/19px 'Liberation Sans',sans-serif;color:#111;">5</div>
<div style="left:894px;top:481px;width:14px;height:14px;background:#fff;border:1px solid;border-color:#a0a0a0 #ffffff #ffffff #a0a0a0;box-sizing:border-box;box-shadow:inset 1px 1px 0 #696969, inset -1px -1px 0 #e3e3e3"></div>
<svg style="left:894px;top:481px" width="14" height="14" viewBox="0 0 14 14"><path d="M3.2 6.6 L5.8 9.4 L10.8 3.6" stroke="#000" stroke-width="2.1" fill="none"/></svg>
<div class="t" style="left:916.00px;top:477px;font:bold 19px/19px 'Liberation Sans',sans-serif;color:#111;">6</div>
<div style="left:939px;top:481px;width:14px;height:14px;background:#fff;border:1px solid;border-color:#a0a0a0 #ffffff #ffffff #a0a0a0;box-sizing:border-box;box-shadow:inset 1px 1px 0 #696969, inset -1px -1px 0 #e3e3e3"></div>
<svg style="left:939px;top:481px" width="14" height="14" viewBox="0 0 14 14"><path d="M3.2 6.6 L5.8 9.4 L10.8 3.6" stroke="#000" stroke-width="2.1" fill="none"/></svg>
<div class="t" style="left:961.00px;top:477px;font:bold 19px/19px 'Liberation Sans',sans-serif;color:#111;">7</div>
<div style="left:885px;top:520px;width:118px;height:37px;background:#f0f0f0;border:1px solid;border-color:#ffffff #6a6a6a #6a6a6a #ffffff;box-sizing:border-box;box-shadow:inset -1px -1px 0 #a0a0a0, inset 1px 1px 0 #f4f4f4"></div>
<div class="t" style="left:918.70px;top:529px;font:bold 18px/18px 'Liberation Sans',sans-serif;color:#111;transform:scaleX(0.9720);transform-origin:0 0;">Apply</div>
<div style="left:731px;top:592px;width:128px;height:46px;background:#f0f0f0;border:1px solid;border-color:#ffffff #6a6a6a #6a6a6a #ffffff;box-sizing:border-box;box-shadow:inset -1px -1px 0 #a0a0a0, inset 1px 1px 0 #f4f4f4"></div>
<div class="t" style="left:770.87px;top:608px;font:16px/16px 'Liberation Sans',sans-serif;color:#111;transform:scaleX(0.9271);transform-origin:0 0;">Cancel</div>
<div style="left:875px;top:592px;width:128px;height:46px;background:#f0f0f0;border:1px solid;border-color:#ffffff #6a6a6a #6a6a6a #ffffff;box-sizing:border-box;box-shadow:inset -1px -1px 0 #a0a0a0, inset 1px 1px 0 #f4f4f4"></div>
<div class="t" style="left:928.70px;top:608px;font:bold 16px/16px 'Liberation Sans',sans-serif;color:#111;transform:scaleX(0.8833);transform-origin:0 0;">OK</div>
</body></html>
